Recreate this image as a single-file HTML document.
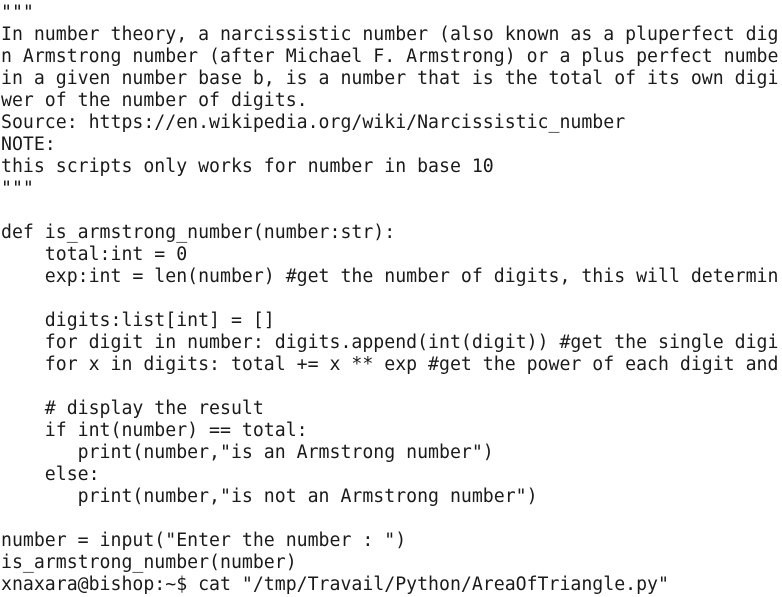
<!DOCTYPE html>
<html><head><meta charset="utf-8"><style>
html,body{margin:0;padding:0;background:#fff;width:782px;height:597px;overflow:hidden}
pre{margin:0;padding:2px 0 0 1px;font-family:"DejaVu Sans Mono","Liberation Mono",monospace;font-size:18.2px;line-height:22px;color:#1a1a1a;white-space:pre}
</style></head><body><pre>"""
In number theory, a narcissistic number (also known as a pluperfect dig
n Armstrong number (after Michael F. Armstrong) or a plus perfect numbe
in a given number base b, is a number that is the total of its own digi
wer of the number of digits.
Source: https://en.wikipedia.org/wiki/Narcissistic_number
NOTE:
this scripts only works for number in base 10
"""

def is_armstrong_number(number:str):
    total:int = 0
    exp:int = len(number) #get the number of digits, this will determin

    digits:list[int] = []
    for digit in number: digits.append(int(digit)) #get the single digi
    for x in digits: total += x ** exp #get the power of each digit and

    # display the result
    if int(number) == total:
       print(number,"is an Armstrong number")
    else:
       print(number,"is not an Armstrong number")

number = input("Enter the number : ")
is_armstrong_number(number)
xnaxara@bishop:~$ cat "/tmp/Travail/Python/AreaOfTriangle.py"
</pre></body></html>
